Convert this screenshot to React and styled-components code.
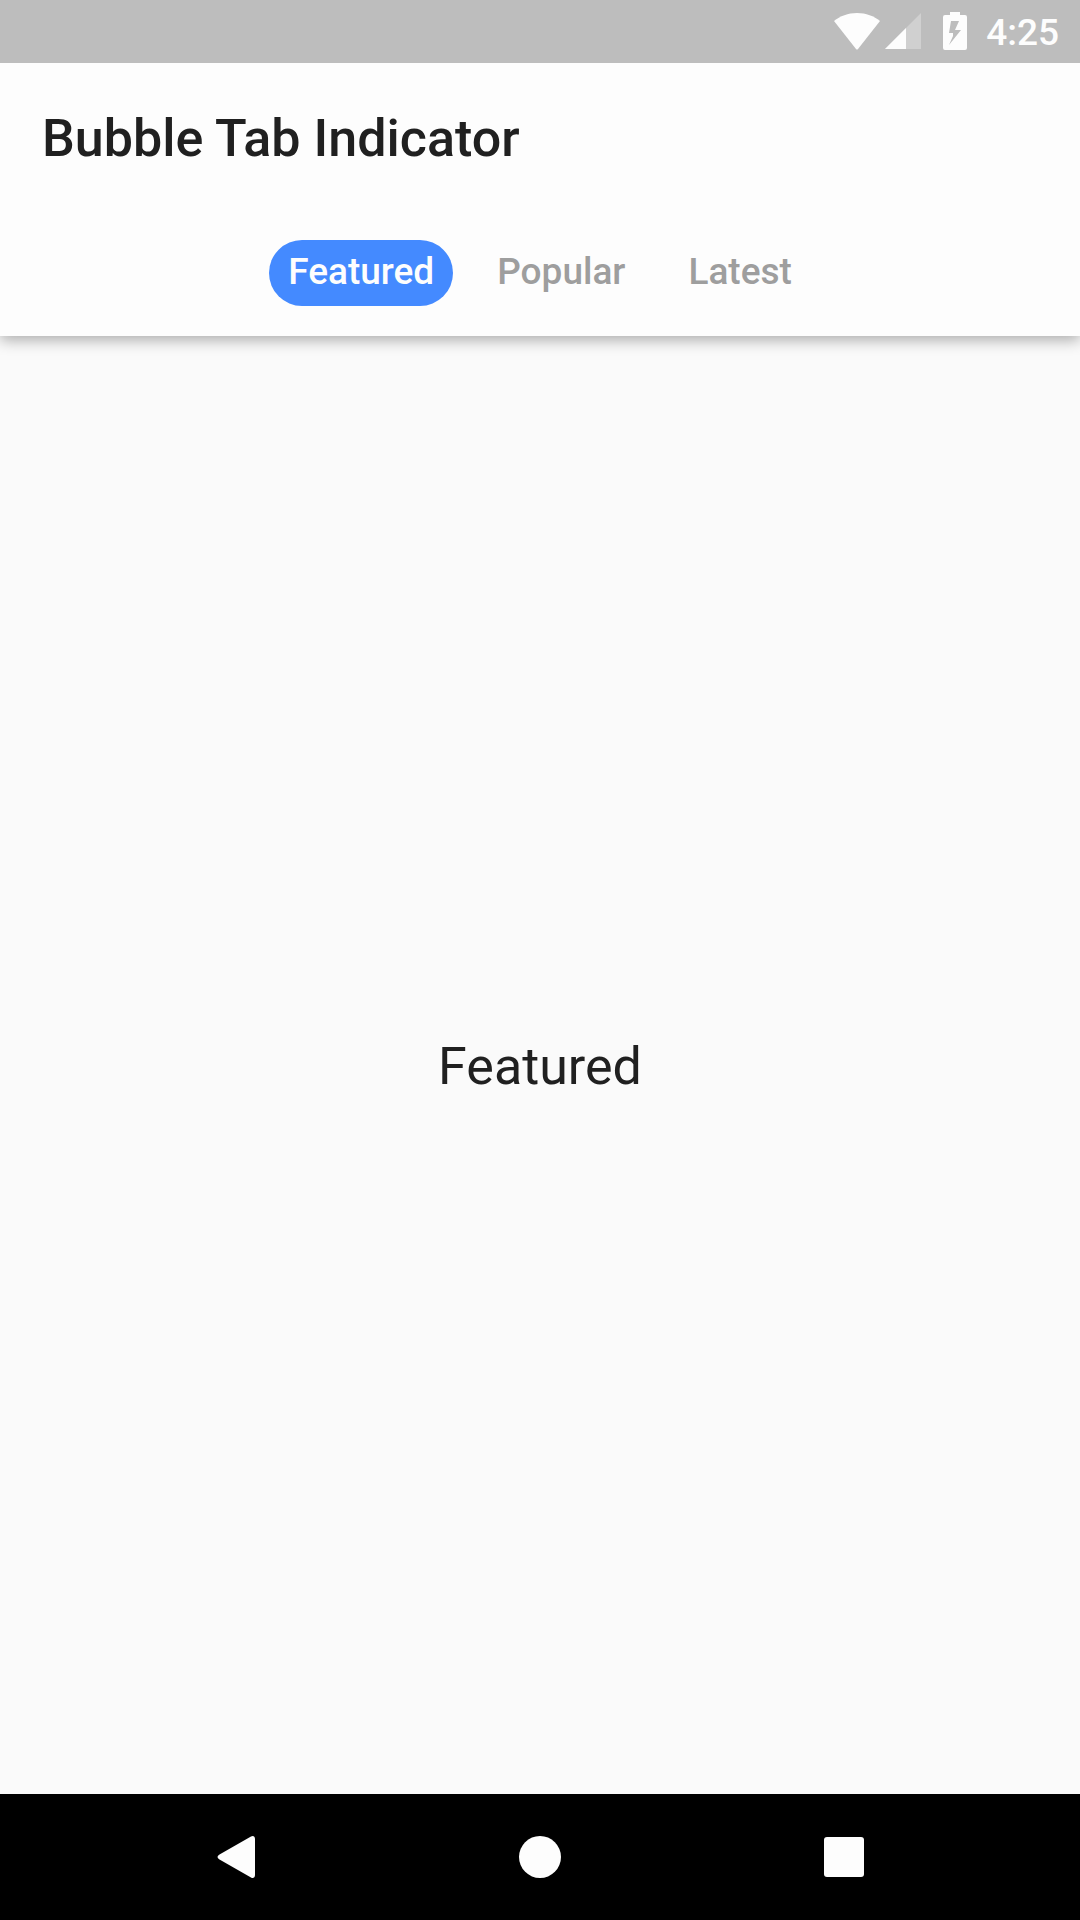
import React, { useState } from "react";
import styled, { createGlobalStyle } from "styled-components";

const GlobalStyle = createGlobalStyle`
  *, *::before, *::after { box-sizing: border-box; }
  body { margin: 0; font-family: Roboto, "Noto Sans", sans-serif; color: #202020; }
`;

const Screen = styled.div`
  display: flex;
  flex-direction: column;
  min-height: 100vh;
  background: #fafafa;
`;

const StatusBar = styled.div`
  position: relative;
  z-index: 2;
  display: flex;
  align-items: center;
  justify-content: flex-end;
  height: 63px;
  padding: 0 21px;
  background: #bdbdbd;
  color: #fdfdfd;
`;

const StatusIcon = styled.svg`
  display: block;
  flex: none;
  margin-right: ${(p) => p.$gap}px;
`;

const Clock = styled.time`
  padding-top: 2px;
  font-size: 37px;
  line-height: 44px;
  font-weight: 500;
`;

const AppBar = styled.header`
  position: relative;
  z-index: 1;
  display: flex;
  flex-direction: column;
  background: #fdfdfd;
  box-shadow: 0 4px 14px rgba(0, 0, 0, 0.32);
`;

const Title = styled.h1`
  margin: 0;
  padding: 44px 42px 36px;
  font-size: 52px;
  line-height: 64px;
  font-weight: 500;
`;

const TabList = styled.div`
  display: flex;
  justify-content: center;
  gap: 25px;
  padding: 33px 42px 30px;
`;

const Tab = styled.button`
  height: 66px;
  padding: 0 19px 2px;
  border: 0;
  border-radius: 33px;
  background: ${(p) => (p.$active ? "#448aff" : "transparent")};
  color: ${(p) => (p.$active ? "#fdfdfd" : "#9e9e9e")};
  font-family: inherit;
  font-size: 37px;
  line-height: 44px;
  font-weight: 500;
  cursor: pointer;
`;

const Panel = styled.main`
  display: flex;
  flex: 1;
  align-items: center;
  justify-content: center;
  padding-top: 4px;
  font-size: 52px;
  line-height: 64px;
`;

const NavBar = styled.nav`
  display: flex;
  align-items: center;
  justify-content: center;
  gap: 178px;
  height: 126px;
  background: #000;
`;

const NavButton = styled.button`
  padding: 0;
  border: 0;
  background: none;
  color: #fdfdfd;
  cursor: pointer;

  svg { display: block; }
`;

const tabs = ["Featured", "Popular", "Latest"];

export default function App() {
  const [active, setActive] = useState(tabs[0]);

  return (
    <Screen>
      <GlobalStyle />
      <StatusBar>
        <StatusIcon $gap={5} width="46" height="37" viewBox="0 0 46 37" fill="currentColor" aria-hidden="true">
          <path d="M0 8C6 3 14 0 23 0s17 3 23 8L24 36Q23 37 22 36Z" />
        </StatusIcon>
        <StatusIcon $gap={22} width="36" height="37" viewBox="0 0 36 37" fill="currentColor" aria-hidden="true">
          <path d="M0 36L36 0V36Z" opacity="0.3" />
          <path d="M0 36L21 15V36Z" />
        </StatusIcon>
        <StatusIcon $gap={19} width="24" height="39" viewBox="0 0 24 39" fill="currentColor" aria-hidden="true">
          <path
            fillRule="evenodd"
            d="M7 0H17V3H22Q24 3 24 5V36Q24 38 22 38H2Q0 38 0 36V5Q0 3 2 3H7ZM8 9L6 21H10V24L6 33L18 18H12L16 9Z"
          />
        </StatusIcon>
        <Clock>4:25</Clock>
      </StatusBar>

      <AppBar>
        <Title>Bubble Tab Indicator</Title>
        <TabList role="tablist" aria-label="Sections">
          {tabs.map((name) => (
            <Tab
              key={name}
              id={`tab-${name}`}
              type="button"
              role="tab"
              aria-selected={active === name}
              aria-controls="panel"
              $active={active === name}
              onClick={() => setActive(name)}
            >
              {name}
            </Tab>
          ))}
        </TabList>
      </AppBar>

      <Panel id="panel" role="tabpanel" aria-labelledby={`tab-${active}`}>
        {active}
      </Panel>

      <NavBar aria-label="System">
        <NavButton type="button" aria-label="Back">
          <svg width="126" height="42" viewBox="0 0 126 42" fill="currentColor" aria-hidden="true">
            <path d="M78 .6C80 -.6 82 .3 82 3V39C82 41.700 80 42.600 78 41.400L46.500 23.500Q42.500 21 46.500 18.500Z" />
          </svg>
        </NavButton>
        <NavButton type="button" aria-label="Home">
          <svg width="126" height="42" viewBox="0 0 126 42" fill="currentColor" aria-hidden="true">
            <circle cx="63" cy="21" r="21" />
          </svg>
        </NavButton>
        <NavButton type="button" aria-label="Recent apps">
          <svg width="126" height="42" viewBox="0 0 126 42" fill="currentColor" aria-hidden="true">
            <rect x="43" y="1" width="40" height="40" rx="3" />
          </svg>
        </NavButton>
      </NavBar>
    </Screen>
  );
}
